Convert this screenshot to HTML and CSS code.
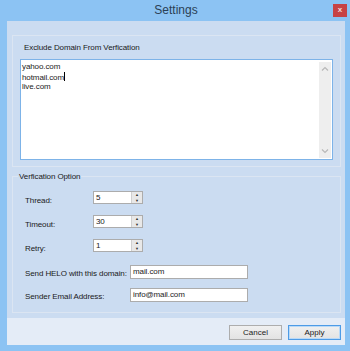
FILE: index.html
```html
<!DOCTYPE html>
<html lang="en">

<head>
    <meta charset="UTF-8">
    <title>Settings</title>
    <link rel="stylesheet" href="styles.css">
</head>

<body>
    <div class="window">
        <div class="titlebar">
            <span></span>
            <span class="title">Settings</span>
            <span class="close">x</span>
        </div>
        <div class="client">
            <div class="content">
                <div class="panel">
                    <div class="panel-label">Exclude Domain From Verfication</div>
                    <div class="memo">
                        <div class="memo-text">yahoo.com<br>hotmail.com<span class="caret"></span><br>live.com</div>
                        <div class="vscroll">
                            <svg width="8" height="5" viewBox="0 0 8 5"><path d="M1 4.5 L4 1.5 L7 4.5" fill="none" stroke="#b8b8b8" stroke-width="1.2"/></svg>
                            <svg width="8" height="5" viewBox="0 0 8 5"><path d="M1 0.5 L4 3.5 L7 0.5" fill="none" stroke="#b8b8b8" stroke-width="1.2"/></svg>
                        </div>
                    </div>
                </div>

                <fieldset class="options">
                    <legend>Verfication Option</legend>
                    <div class="row">
                        <span class="label">Thread:</span>
                        <div class="spin"><span class="val">5</span><span class="arrows"><i>&#9650;</i><i>&#9660;</i></span></div>
                    </div>
                    <div class="row">
                        <span class="label">Timeout:</span>
                        <div class="spin"><span class="val">30</span><span class="arrows"><i>&#9650;</i><i>&#9660;</i></span></div>
                    </div>
                    <div class="row">
                        <span class="label">Retry:</span>
                        <div class="spin"><span class="val">1</span><span class="arrows"><i>&#9650;</i><i>&#9660;</i></span></div>
                    </div>
                    <div class="row wide first">
                        <span class="label">Send HELO with this domain:</span>
                        <div class="field">mail.com</div>
                    </div>
                    <div class="row wide">
                        <span class="label">Sender Email Address:</span>
                        <div class="field">info@mail.com</div>
                    </div>
                </fieldset>
            </div>
            <div class="footer">
                <button class="btn">Cancel</button>
                <button class="btn default">Apply</button>
            </div>
        </div>
    </div>
</body>

</html>
```

FILE: styles.css
```css
body {
    margin: 0;
    font-family: "Liberation Sans", Arial, sans-serif;
    font-size: 8px;
    letter-spacing: -0.1px;
    color: #1a1a1a;
}

.window {
    width: 350px;
    height: 351px;
    background-color: #8cc3f3;
    display: flex;
    flex-direction: column;
    box-sizing: border-box;
    padding: 0 5px 6px 7px;
}

.titlebar {
    height: 22px;
    display: grid;
    grid-template-columns: 1fr auto 1fr;
    align-items: center;
}

.title {
    font-size: 12px;
    letter-spacing: 0;
    color: #2b3f55;
    margin-top: -1px;
}

.close {
    justify-self: end;
    align-self: start;
    margin-top: 4px;
    margin-right: -2px;
    width: 14px;
    height: 13px;
    background-color: #c74244;
    color: #f4dada;
    font-size: 8px;
    font-weight: bold;
    text-align: center;
    line-height: 12px;
}

.client {
    flex: 1;
    display: flex;
    flex-direction: column;
    background-color: #cbdcf1;
}

.content {
    flex: 1;
    padding: 14px 4px 0 5px;
}

.panel {
    border: 1px solid #dbe5f2;
    height: 132px;
    box-sizing: border-box;
    padding: 7px 7px 0 7px;
}

.panel-label {
    margin-left: 4px;
    height: 16px;
    line-height: 10px;
}

.memo {
    height: 101px;
    border: 1px solid #7db3e8;
    background-color: #fff;
    display: flex;
    box-sizing: border-box;
}

.memo-text {
    flex: 1;
    padding: 2px 0 0 1px;
    line-height: 9.5px;
}

.caret {
    display: inline-block;
    width: 1px;
    height: 9px;
    background-color: #000;
    vertical-align: -1px;
}

.vscroll {
    width: 12px;
    margin: 2px 1px 1px 0;
    background-color: #eeeeee;
    display: flex;
    flex-direction: column;
    justify-content: space-between;
    align-items: center;
    padding: 4px 0;
}

.options {
    margin: 5px 0 0 0;
    padding: 4px 0 0 12px;
    border: 1px solid #dbe5f2;
    height: 141px;
    box-sizing: border-box;
}

.options legend {
    padding: 0 1px;
    margin-left: -7px;
}

.row {
    display: flex;
    align-items: center;
    height: 13px;
    margin-top: 11px;
}

.row:first-of-type {
    margin-top: 6px;
}

.label {
    width: 68px;
    padding-top: 5px;
}

.spin {
    width: 50px;
    height: 13px;
    box-sizing: border-box;
    border: 1px solid #acacac;
    background-color: #fff;
    display: flex;
}

.val {
    flex: 1;
    padding-left: 2px;
    line-height: 11px;
}

.arrows {
    width: 10px;
    display: flex;
    flex-direction: column;
    background-color: #e8e8e8;
    border-left: 1px solid #d0d0d0;
}

.arrows i {
    flex: 1;
    font-style: normal;
    font-size: 4px;
    line-height: 5.5px;
    text-align: center;
    color: #333;
}

.row.wide {
    height: 14px;
    margin-top: 9px;
}

.row.first {
    margin-top: 13px;
}

.row.wide .label {
    width: 105px;
    white-space: nowrap;
    padding-top: 3px;
}

.field {
    width: 118px;
    height: 14px;
    box-sizing: border-box;
    border: 1px solid #acacac;
    background-color: #fff;
    padding-left: 2px;
    line-height: 12px;
}

.footer {
    height: 27px;
    margin-top: 5px;
    background-color: #e4ecf7;
    display: flex;
    justify-content: flex-end;
    align-items: center;
    gap: 6px;
    padding-right: 4px;
}

.btn {
    width: 53px;
    height: 15px;
    padding: 0;
    font-family: "Liberation Sans", Arial, sans-serif;
    font-size: 8px;
    color: #1a1a1a;
    background: linear-gradient(#f0f0f0, #e3e3e3);
    border: 1px solid #adadad;
    margin-top: 2px;
}

.btn.default {
    border: 1px solid #4d9be6;
    box-shadow: inset 0 0 0 1px #b9d9f7;
}
```
